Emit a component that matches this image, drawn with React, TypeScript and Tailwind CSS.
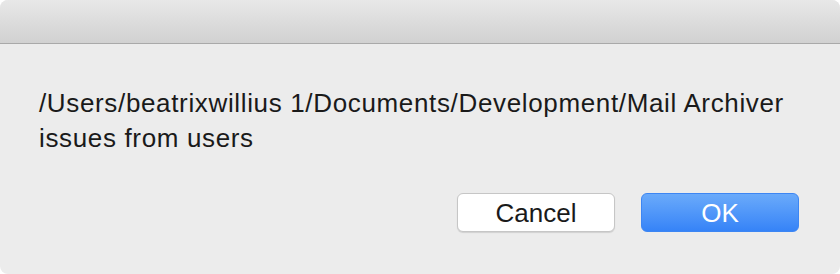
export default function App() {
  return (
    <div className="w-[840px] h-[274px] bg-white" style={{ fontFamily: '"Liberation Sans", Arial, sans-serif' }}>
      <div className="flex h-full w-full flex-col overflow-hidden rounded-[8px] bg-[#ececec]">
        <div className="h-[44px] shrink-0 border-b border-[#a9a9a9] bg-gradient-to-b from-[#e8e8e8] to-[#d1d1d1]" />
        <div className="flex flex-1 flex-col pl-[39px] pr-[41px]">
          <p className="mt-[42px] text-[26px] leading-[35px] tracking-[0.65px] text-[#1a1a1a]">
            /Users/beatrixwillius 1/Documents/Development/Mail Archiver
            <br />
            issues from users
          </p>
          <div className="mt-auto mb-[42px] flex justify-end gap-[26px]">
            <button className="h-[39px] w-[158px] rounded-[6px] border border-[#c6c6c6] bg-white text-[26px] leading-none text-[#1a1a1a] shadow-[0_1px_1px_rgba(0,0,0,0.12)]">
              Cancel
            </button>
            <button className="h-[39px] w-[158px] rounded-[6px] border border-[#3d86f3] bg-gradient-to-b from-[#6aaafa] to-[#3683f7] text-[26px] leading-none text-white">
              OK
            </button>
          </div>
        </div>
      </div>
    </div>
  );
}
